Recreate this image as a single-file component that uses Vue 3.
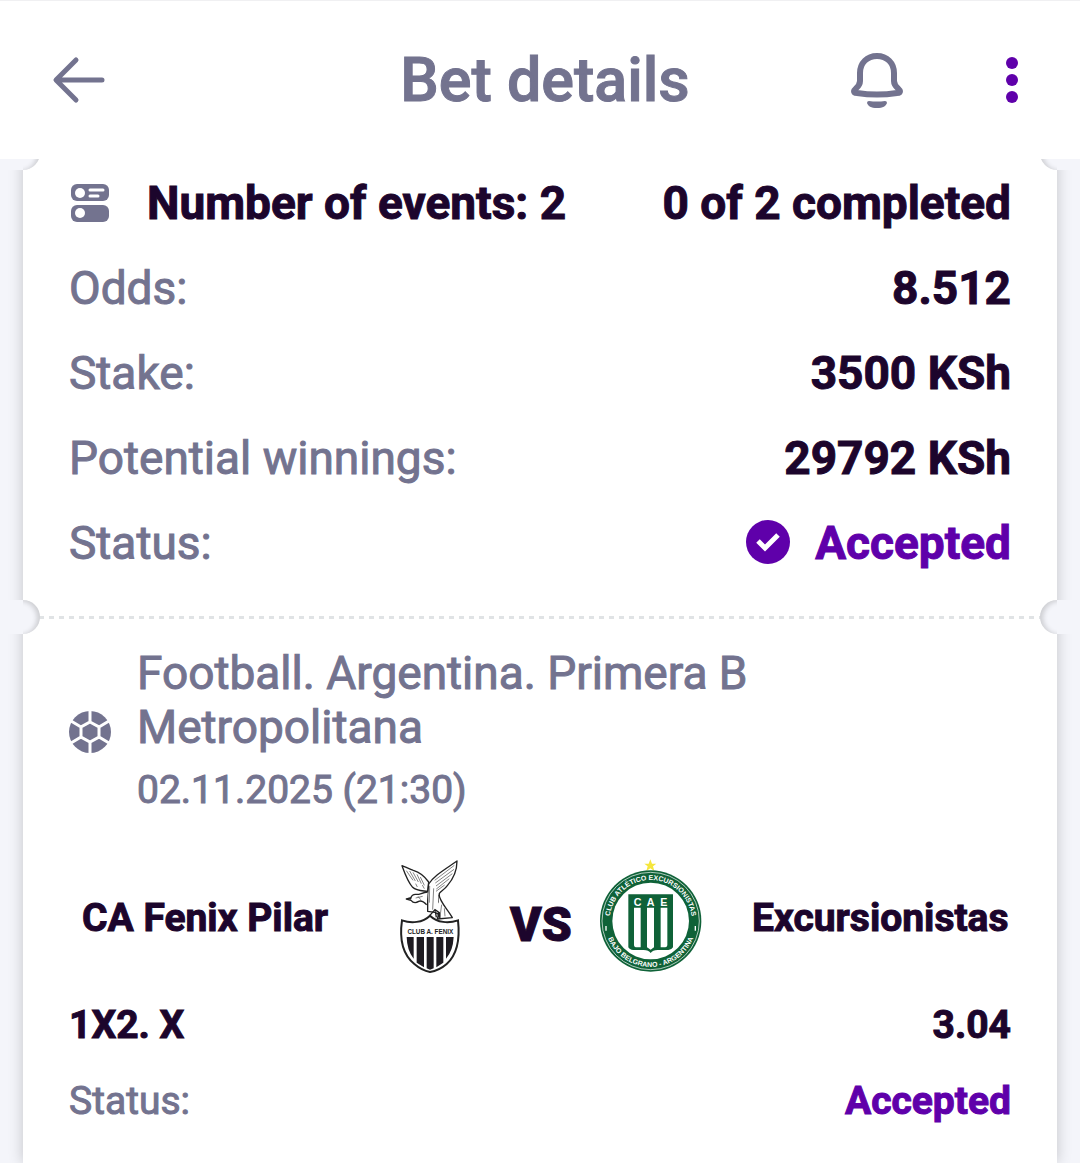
<template>
  <div class="page">
    <header class="topbar">
      <button class="icon-btn" type="button" aria-label="Back">
        <svg width="54" height="48" viewBox="0 0 54 48">
          <path d="M25 4 L5 24 L25 44 M6 24 H51" class="stroke-icon" />
        </svg>
      </button>
      <h1 class="topbar-title">Bet details</h1>
      <div class="topbar-actions">
        <button class="icon-btn" type="button" aria-label="Notifications">
          <svg width="54" height="58" viewBox="0 0 54 58">
            <path
              d="M27 5 C17 5 10 12 10 22 V30 C10 36 4 38 4 40 Q4 42 7 42 C20 44 34 44 47 42 Q50 42 50 40 C50 38 44 36 44 30 V22 C44 12 37 5 27 5 Z"
              class="stroke-icon bell"
            />
            <path d="M19 50 Q27 51 35 50 Q37 50 37 52 C36 55 33 57 27 57 C21 57 18 55 17 52 Q17 50 19 50 Z" fill="#73738f" />
          </svg>
        </button>
        <button class="icon-btn" type="button" aria-label="More">
          <svg width="12" height="48" viewBox="0 0 12 48">
            <circle cx="6" cy="7" r="6" fill="#5f00aa" />
            <circle cx="6" cy="24" r="6" fill="#5f00aa" />
            <circle cx="6" cy="41" r="6" fill="#5f00aa" />
          </svg>
        </button>
      </div>
    </header>

    <main class="ticket">
      <section class="summary">
        <span class="notch left"></span>
        <span class="notch right"></span>
        <div class="row strong">
          <span class="events">
            <svg width="38" height="38" viewBox="0 0 38 38">
              <rect width="38" height="17" rx="6" fill="#73738f" />
              <rect y="21" width="38" height="17" rx="6" fill="#73738f" />
              <circle cx="9" cy="9" r="5" fill="#fff" />
              <circle cx="9" cy="29" r="5" fill="#fff" />
              <path d="M19 6 H32 M19 12 H27" stroke="#fff" stroke-width="3" stroke-linecap="round" />
            </svg>
            Number of events: {{ bet.events }}
          </span>
          <span>{{ bet.completed }} of {{ bet.events }} completed</span>
        </div>
        <dl class="rows">
          <div v-for="item in details" :key="item.label" class="row">
            <dt>{{ item.label }}</dt>
            <dd>{{ item.value }}</dd>
          </div>
          <div class="row">
            <dt>Status:</dt>
            <dd class="accepted">
              <svg width="46" height="46" viewBox="0 0 46 46">
                <circle cx="23" cy="22" r="22" fill="#5f00aa" />
                <path d="M13 21 L20 28 L33 15" fill="none" stroke="#fff" stroke-width="5" />
              </svg>
              {{ bet.status }}
            </dd>
          </div>
        </dl>
      </section>

      <div class="divider">
        <span class="notch left"></span>
        <span class="notch right"></span>
      </div>

      <section class="event">
        <div class="league">
          <svg width="42" height="42" viewBox="0 0 42 42">
            <circle cx="21" cy="21" r="21" fill="#73738f" />
            <path
              d="M21 11 L30 16 V26 L21 31 L12 26 V16 Z M21 11 V0 M30 16 L40 10 M30 26 L40 32 M21 31 V42 M12 26 L2 32 M12 16 L2 10"
              fill="none"
              stroke="#fff"
              stroke-width="3"
            />
          </svg>
          <div>
            <h2 class="league-name">{{ event.league }}</h2>
            <time class="league-date" datetime="2025-11-02T21:30">{{ event.date }}</time>
          </div>
        </div>

        <div class="teams">
          <span class="team">{{ event.home }}</span>
          <svg class="crest" viewBox="-27 15 324 360" role="img" aria-label="CA Fenix Pilar">
            <g fill="#fff" stroke="#222" stroke-width="4" stroke-linejoin="round">
              <path d="M131 96 C117 76 102 66 85 61 C70 56 60 50 51 47 C60 72 68 95 83 112 C95 124 112 122 128 124 Z" />
              <path d="M131 102 C146 78 174 62 216 33 C216 60 207 84 187 107 C179 118 168 124 163 130 L162 156 L174 183 C170 195 159 194 150 187 L128 184 L128 134 Z" />
              <path d="M128 126 C110 128 103 135 93 133 C84 132 79 139 77 144 L64 147 L78 151 C83 157 92 160 101 154 C111 150 119 158 125 164" />
              <path d="M162 134 C164 156 190 180 202 203 L157 207 L162 187" />
            </g>
            <path
              d="M64 62 L84 91 M74 63 L91 93 M84 67 L100 96 M96 73 L109 101 M106 81 L118 106 M92 101 L97 111 M112 105 L118 116 M208 46 L149 91 M207 58 L151 99 M202 71 L153 108 M193 86 L154 117 M179 105 L153 124 M134 108 L133 158 M146 115 L143 179 M170 164 L165 200 M178 175 L180 199 M92 144 L113 139 M99 139 L107 149"
              fill="none"
              stroke="#444"
              stroke-width="2"
            />
            <path d="M65 145 L80 142 L78 149 Z" fill="#222" />
            <path
              d="M51 211 C79 221 113 218 135 197 C157 218 190 221 219 211 C225 265 216 314 185 342 Q162 362 135 366 Q110 361 88 342 C54 314 43 266 51 211 Z"
              fill="#fff"
              stroke="#222"
              stroke-width="6"
            />
            <path
              d="M65 261 H86 V326 Q66 302 65 261 Z M95 261 H117 V352 L95 338 Z M125 261 H146 V355 L135 359 L125 355 Z M154 261 H175 V338 L154 352 Z M183 261 H206 Q204 303 183 326 Z"
              fill="#1d1a20"
            />
            <path d="M134 197 L150 179 L163 188 L165 206 M151 184 L154 202 M159 188 L162 203" fill="none" stroke="#222" stroke-width="4" />
            <text x="136" y="251" text-anchor="middle" class="crest-text fenix-text">CLUB A. FENIX</text>
          </svg>
          <span class="versus">VS</span>
          <svg class="crest" viewBox="18 15 324 360" role="img" aria-label="Excursionistas">
            <defs>
              <path id="arc-top" d="M59 213 A123 123 0 0 1 305 213" />
              <path id="arc-bottom" d="M44 213 A138 138 0 0 0 320 213" />
            </defs>
            <path d="M181 28 L186 41 L199 41 L189 49 L193 63 L181 55 L169 63 L173 49 L163 41 L176 41 Z" fill="#f5e63d" />
            <circle cx="182" cy="213" r="152" fill="#0f6238" />
            <circle cx="182" cy="213" r="146" fill="none" stroke="#fff" stroke-width="2" />
            <circle cx="182" cy="213" r="115" fill="#fff" />
            <text class="crest-text ring-text">
              <textPath href="#arc-top" startOffset="50%" text-anchor="middle">CLUB ATLÉTICO EXCURSIONISTAS</textPath>
            </text>
            <text class="crest-text ring-text">
              <textPath href="#arc-bottom" startOffset="50%" text-anchor="middle">BAJO BELGRANO - ARGENTINA</textPath>
            </text>
            <path d="M48 228 V242 M316 228 V242" stroke="#fff" stroke-width="4" />
            <path d="M115 133 H249 V292 Q246 299 235 300 H203 Q188 300 182 309 Q176 300 161 300 H130 Q118 299 115 292 Z" fill="#0f6238" />
            <path d="M132 173 H152 V292 H137 Q132 291 132 286 Z M171 173 H192 V292 L182 299 L171 292 Z M212 173 H232 V286 Q231 292 226 292 H212 Z" fill="#fff" />
            <text x="131 155 170 194 211" y="167" class="crest-text cae-text">C A E</text>
          </svg>
          <span class="team away">{{ event.away }}</span>
        </div>

        <div class="row compact strong">
          <span>{{ event.market }}</span>
          <span>{{ event.odds }}</span>
        </div>
        <dl class="rows">
          <div class="row compact">
            <dt>Status:</dt>
            <dd class="accepted">{{ event.status }}</dd>
          </div>
        </dl>
      </section>
    </main>
  </div>
</template>

<script setup>
const bet = {
  events: 2,
  completed: 0,
  status: 'Accepted'
}

const details = [
  { label: 'Odds:', value: '8.512' },
  { label: 'Stake:', value: '3500 KSh' },
  { label: 'Potential winnings:', value: '29792 KSh' }
]

const event = {
  league: 'Football. Argentina. Primera B Metropolitana',
  date: '02.11.2025 (21:30)',
  home: 'CA Fenix Pilar',
  away: 'Excursionistas',
  market: '1X2. X',
  odds: '3.04',
  status: 'Accepted'
}
</script>

<style>
body {
  background: #f4f5fa;
}
</style>

<style scoped>
.page {
  min-height: 100vh;
  display: flex;
  flex-direction: column;
  overflow: hidden;
  color: #1c052c;
  font-family: Roboto, "Liberation Sans", sans-serif;
  -webkit-text-stroke: 1px;
}

.topbar {
  position: relative;
  z-index: 2;
  display: grid;
  grid-template-columns: 1fr auto 1fr;
  align-items: center;
  box-sizing: border-box;
  height: 159px;
  padding: 0 62px 0 51px;
  background: #fff;
  border-top: 1px solid #f0f0f2;
}

.topbar-title {
  margin: 0;
  padding-left: 21px;
  color: #73738f;
  font-size: 61px;
  font-weight: 500;
  line-height: 72px;
}

.topbar-actions {
  display: flex;
  align-items: center;
  justify-content: flex-end;
  gap: 102px;
}

.icon-btn {
  display: flex;
  justify-self: start;
  padding: 0;
  border: 0;
  background: none;
}

.stroke-icon {
  fill: none;
  stroke: #73738f;
  stroke-width: 5;
  stroke-linecap: round;
  stroke-linejoin: round;
}

.bell {
  stroke-width: 6;
}

.ticket {
  flex: 1;
  margin: 0 23px;
  background: #fff;
  box-shadow: 0 0 14px rgba(0, 0, 0, 0.2);
}

.summary {
  position: relative;
  padding: 1px 46px 31px;
}

.notch {
  position: absolute;
  top: -23px;
  width: 40px;
  height: 34px;
  background: #f4f5fa;
}

/* inner shadow only on the rounded half that cuts into the ticket */
.notch::after {
  content: "";
  position: absolute;
  top: 0;
  width: 34px;
  height: 34px;
  border-radius: 50%;
}

.notch.left {
  left: -23px;
  border-radius: 0 17px 17px 0;
}

.notch.left::after {
  right: 0;
  box-shadow: inset -3px 1px 5px rgba(0, 0, 0, 0.16);
  clip-path: inset(0 0 0 50%);
}

.notch.right {
  right: -23px;
  border-radius: 17px 0 0 17px;
}

.notch.right::after {
  left: 0;
  box-shadow: inset 3px 1px 5px rgba(0, 0, 0, 0.16);
  clip-path: inset(0 50% 0 0);
}

.row {
  display: flex;
  align-items: center;
  justify-content: space-between;
  height: 85px;
  font-size: 46px;
}

.row.compact {
  height: 76px;
  font-size: 39px;
}

.strong,
dd {
  font-weight: 700;
}

.events,
dd {
  display: flex;
  align-items: center;
}

.events {
  gap: 38px;
  padding-left: 2px;
}

.rows,
dd {
  margin: 0;
}

dt {
  color: #73738f;
}

dd {
  gap: 24px;
}

.accepted {
  color: #5f00aa;
}

.divider {
  position: relative;
  height: 3px;
  margin: 0 16px;
  background: repeating-linear-gradient(90deg, #e0e3e5 0 5px, transparent 5px 10px);
}

.divider .notch {
  top: -16px;
}

.divider .left {
  left: -39px;
}

.divider .right {
  right: -39px;
}

.event {
  padding: 27px 46px 24px;
}

.league {
  display: flex;
  align-items: center;
  gap: 26px;
  color: #73738f;
}

.league svg {
  flex-shrink: 0;
}

.league-name {
  max-width: 680px;
  margin: 0 0 9px;
  font-size: 46px;
  font-weight: 400;
  line-height: 54px;
}

.league-date {
  display: block;
  font-size: 39px;
  line-height: 54px;
}

.teams {
  display: grid;
  grid-template-columns: 1fr 108px 60px 108px 1fr;
  column-gap: 26px;
  align-items: center;
  margin-top: 38px;
  margin-bottom: 12px;
}

.team {
  padding-top: 6px;
  padding-left: 13px;
  font-size: 39px;
  font-weight: 700;
  white-space: nowrap;
}

.team.away {
  padding-left: 22px;
}

.crest {
  width: 108px;
  height: 120px;
}

.versus {
  padding-top: 18px;
  font-size: 48px;
  font-weight: 900;
  text-align: center;
}

.crest-text {
  font-family: "Liberation Sans", sans-serif;
  font-weight: 700;
  -webkit-text-stroke: 0;
}

.fenix-text {
  fill: #222;
  font-size: 19px;
}

.ring-text {
  fill: #fff;
  font-size: 21px;
}

.cae-text {
  fill: #fff;
  font-size: 32px;
}
</style>
